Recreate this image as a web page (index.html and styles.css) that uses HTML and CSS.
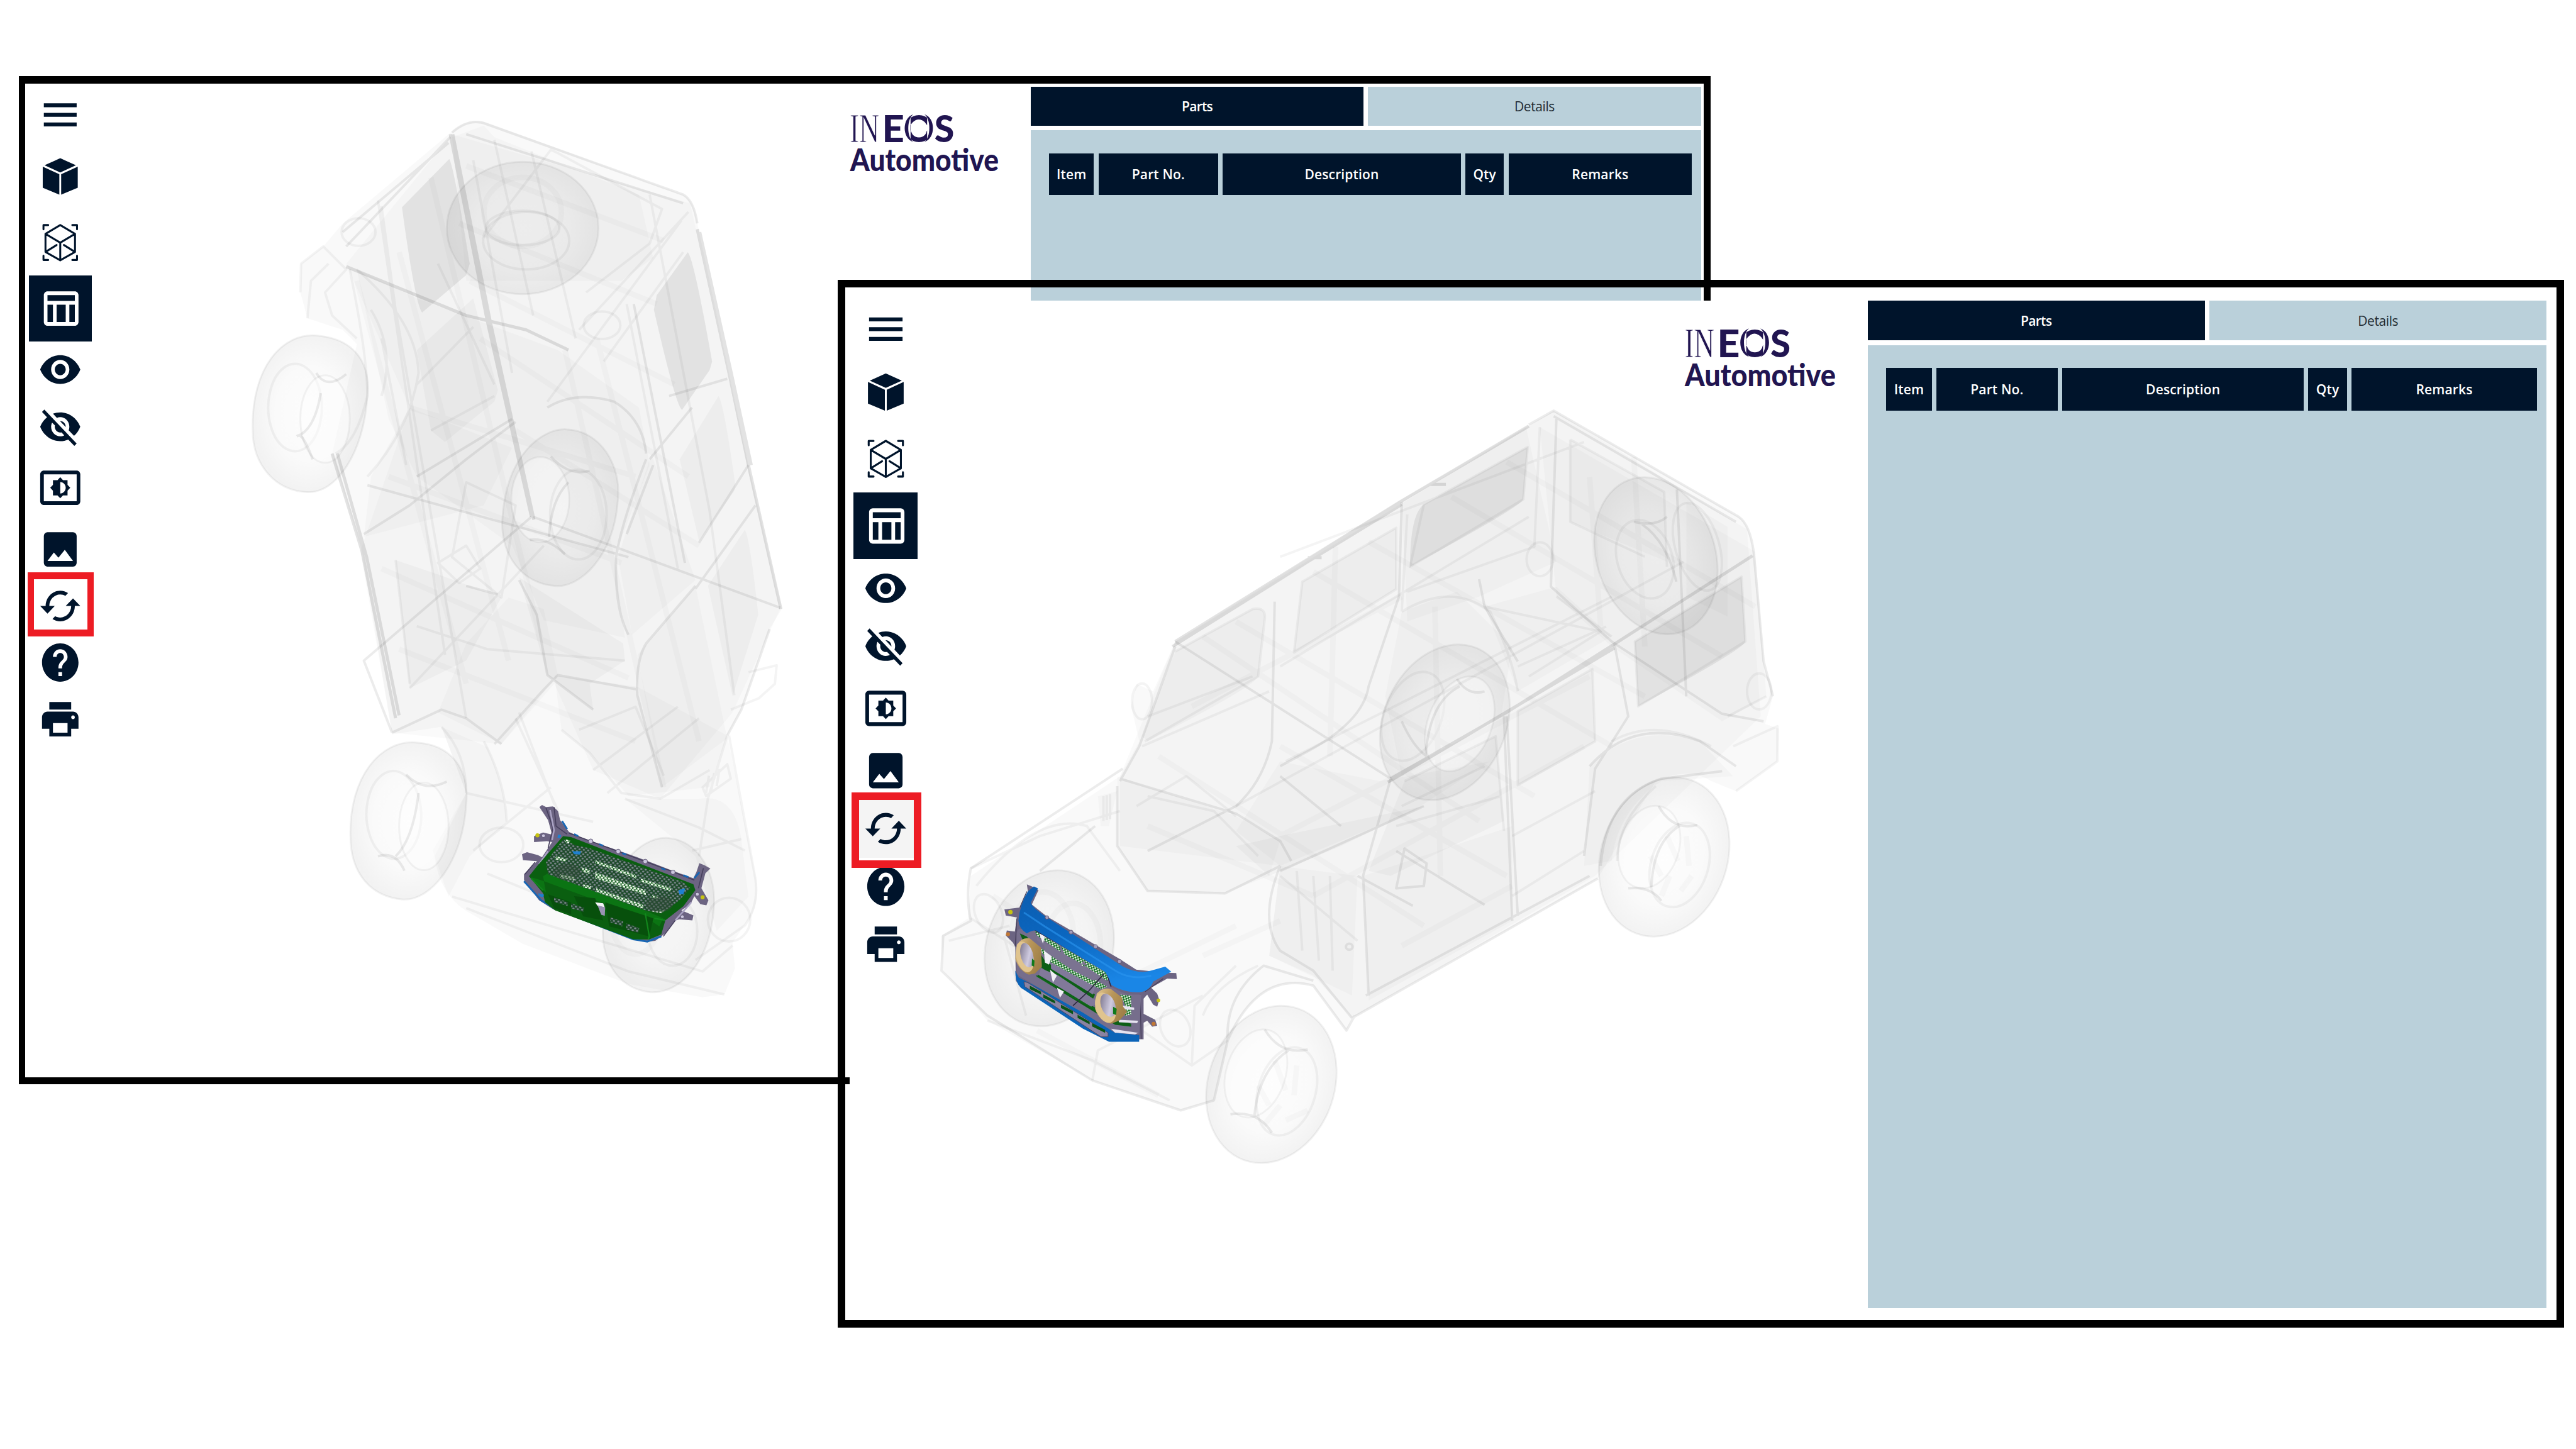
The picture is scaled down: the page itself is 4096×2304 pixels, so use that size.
FILE: index.html
```html
<!DOCTYPE html>
<html lang="en">
<head>
<meta charset="utf-8">
<title>INEOS Automotive parts viewer</title>
<link rel="stylesheet" href="styles.css">
</head>
<body>
<svg class="defs" width="0" height="0" aria-hidden="true">
  <defs>
    <symbol id="i-menu" viewBox="0 0 24 24" preserveAspectRatio="none"><path d="M3 18h18v-2H3zm0-5h18v-2H3zm0-7v2h18V6z"/></symbol>
    <symbol id="i-cube" viewBox="0 0 24 24" preserveAspectRatio="none"><path d="M12 2.500 20.600 6.150 12 9.900 3.400 6.150zM2.400 6.850 11.500 10.800V21.500L2.400 17.900zM21.600 6.850 12.500 10.800V21.500L21.600 17.900z"/></symbol>
    <symbol id="i-scan" viewBox="0 0 24 24" preserveAspectRatio="none"><path class="ln" d="M12 2.900 20.100 7.500V16.900L12 21.300 3.900 16.900V7.500zM3.900 7.500 12 12.100 20.100 7.500M12 12.100V21.300M3.900 16.900 10 13.300M20.100 16.900 14 13.300M2.800 5.100V2.900H5.400M18.600 2.900H21.200V5.100M2.800 18.900V21.100H5.400M18.600 21.100H21.200V18.900"/></symbol>
    <symbol id="i-table" viewBox="0 0 24 24" preserveAspectRatio="none"><path d="M20 3H5c-1.100 0-2 .9-2 2v14c0 1.100.9 2 2 2h15c1.100 0 2-.9 2-2V5c0-1.100-.9-2-2-2zm0 2v3H5V5h15zm-5 14h-5v-9h5v9zM5 10h3v9H5v-9zm12 9v-9h3v9h-3z"/></symbol>
    <symbol id="i-eye" viewBox="0 0 24 24" preserveAspectRatio="none"><path d="M12 4.500C7 4.500 2.730 7.610 1 12c1.730 4.390 6 7.500 11 7.500s9.270-3.110 11-7.500c-1.730-4.390-6-7.500-11-7.500zM12 17c-2.760 0-5-2.240-5-5s2.240-5 5-5 5 2.240 5 5-2.240 5-5 5zm0-8c-1.660 0-3 1.340-3 3s1.340 3 3 3 3-1.340 3-3-1.340-3-3-3z"/></symbol>
    <symbol id="i-eyeoff" viewBox="0 0 24 24" preserveAspectRatio="none"><path d="M12 7c2.760 0 5 2.240 5 5 0 .65-.13 1.260-.36 1.830l2.920 2.920c1.510-1.260 2.700-2.890 3.430-4.750-1.730-4.390-6-7.500-11-7.500-1.400 0-2.740.25-3.980.7l2.160 2.160C10.740 7.130 11.350 7 12 7zM2 4.270l2.280 2.280.46.46C3.080 8.300 1.780 10.020 1 12c1.730 4.390 6 7.500 11 7.500 1.550 0 3.030-.3 4.380-.84l.42.42L19.730 22 21 20.730 3.270 3 2 4.270zM7.530 9.800l1.550 1.550c-.05.21-.08.43-.08.650 0 1.660 1.340 3 3 3 .22 0 .44-.03.65-.08l1.550 1.550c-.67.33-1.410.53-2.200.53-2.760 0-5-2.240-5-5 0-.79.2-1.530.53-2.200zm4.310-.78l3.150 3.150.02-.16c0-1.660-1.340-3-3-3l-.17.01z"/></symbol>
    <symbol id="i-bright" viewBox="0 0 24 24" preserveAspectRatio="none"><path d="M21 3H3c-1.100 0-2 .9-2 2v14c0 1.100.9 2 2 2h18c1.100 0 2-.9 2-2V5c0-1.100-.9-2-2-2zm0 16.010H3V4.990h18v14.020zM8 16h2.500l1.500 1.500 1.500-1.500H16v-2.500l1.500-1.500-1.500-1.500V8h-2.500L12 6.500 10.500 8H8v2.500L6.500 12 8 13.500V16zm4-7c1.660 0 3 1.340 3 3s-1.340 3-3 3V9z"/></symbol>
    <symbol id="i-image" viewBox="0 0 24 24" preserveAspectRatio="none"><path fill-rule="evenodd" d="M5 3h14a2 2 0 0 1 2 2v14a2 2 0 0 1-2 2H5a2 2 0 0 1-2-2V5a2 2 0 0 1 2-2zM5 18H19L14.500 12.200 11 16.300 8.500 13.600z"/></symbol>
    <symbol id="i-sync" viewBox="0 0 24 24" preserveAspectRatio="none"><path d="M19 8l-4 4h3c0 3.310-2.690 6-6 6-1.010 0-1.970-.25-2.800-.7l-1.460 1.460C8.970 19.540 10.430 20 12 20c4.420 0 8-3.580 8-8h3l-4-4zM6 12c0-3.310 2.690-6 6-6 1.010 0 1.970.25 2.800.7l1.460-1.460C15.030 4.460 13.570 4 12 4c-4.420 0-8 3.580-8 8H1l4 4 4-4H6z"/></symbol>
    <symbol id="i-help" viewBox="0 0 24 24" preserveAspectRatio="none"><path d="M12 2C6.480 2 2 6.480 2 12s4.480 10 10 10 10-4.480 10-10S17.520 2 12 2zm1 17h-2v-2h2v2zm2.070-7.750l-.9.920C13.450 12.900 13 13.500 13 15h-2v-.5c0-1.100.45-2.100 1.170-2.830l1.240-1.260c.37-.36.59-.86.59-1.410 0-1.100-.9-2-2-2s-2 .9-2 2H8c0-2.210 1.790-4 4-4s4 1.790 4 4c0 .88-.36 1.680-.93 2.250z"/></symbol>
    <symbol id="i-print" viewBox="0 0 24 24" preserveAspectRatio="none"><path d="M19 8H5c-1.660 0-3 1.340-3 3v6h4v4h12v-4h4v-6c0-1.660-1.340-3-3-3zm-3 11H8v-5h8v5zm3-7c-.55 0-1-.45-1-1s.45-1 1-1 1 .45 1 1-.45 1-1 1zm-1-9H6v4h12V3z"/></symbol>

    <radialGradient id="tyre" cx=".5" cy=".5" r=".5">
      <stop offset="0" stop-opacity=".01"/><stop offset=".6" stop-opacity=".02"/><stop offset="1" stop-opacity=".05"/>
    </radialGradient>
    <linearGradient id="blue" x1="0" y1="0" x2=".25" y2="1">
      <stop offset="0" stop-color="#0c5cae"/><stop offset=".5" stop-color="#0b66bf"/><stop offset="1" stop-color="#1a86e6"/>
    </linearGradient>
    <linearGradient id="gold" x1="0" y1="0" x2="1" y2=".5">
      <stop offset="0" stop-color="#e3c995"/><stop offset=".5" stop-color="#b8965a"/><stop offset="1" stop-color="#a08048"/>
    </linearGradient>
    <linearGradient id="lamp" x1="0" y1="0" x2="1" y2="1">
      <stop offset="0" stop-color="#6f6880"/><stop offset=".6" stop-color="#cfcbe0"/><stop offset="1" stop-color="#8b84a0"/>
    </linearGradient>
    <pattern id="mesh" width="22" height="22" patternUnits="userSpaceOnUse" patternTransform="rotate(8)">
      <rect width="22" height="22" fill="#1d4a2a"/>
      <path fill="#808a90" d="M2 5.500 5 1.500H11L14 5.500 11 9.500H5zM13 16.500 16 12.500H22V20.500H16zM0 12.500 3 16.500 0 20.500zM22 12.500V20.500z"/>
    </pattern>
    <pattern id="meshlight" width="18" height="20" patternUnits="userSpaceOnUse" patternTransform="rotate(8)">
      <rect width="18" height="20" fill="#1c6426"/>
      <ellipse cx="5" cy="5" rx="7.400" ry="4.800" fill="#f2fbef"/><ellipse cx="14" cy="15" rx="7.400" ry="4.800" fill="#f2fbef"/>
    </pattern>
    <pattern id="meshfront" width="16" height="18" patternUnits="userSpaceOnUse" patternTransform="rotate(28)">
      <rect width="16" height="18" fill="#12701f"/>
      <ellipse cx="4" cy="5" rx="4.800" ry="4.200" fill="#f0f8f0"/><ellipse cx="12" cy="14" rx="4.800" ry="4.200" fill="#f0f8f0"/>
    </pattern>
  </defs>
</svg>

<main class="desktop">

  <section class="window back">
    <div class="app">
      <nav class="toolbar">
        <button><svg><use href="#i-menu"/></svg></button>
        <button class="tall"><svg><use href="#i-cube"/></svg></button>
        <button class="tall"><svg><use href="#i-scan"/></svg></button>
        <button class="tall active"><svg><use href="#i-table"/></svg></button>
        <button><svg><use href="#i-eye"/></svg></button>
        <button><svg><use href="#i-eyeoff"/></svg></button>
        <button class="tall"><svg><use href="#i-bright"/></svg></button>
        <button><svg><use href="#i-image"/></svg></button>
        <button class="marked"><svg><use href="#i-sync"/></svg></button>
        <button><svg><use href="#i-help"/></svg></button>
        <button><svg><use href="#i-print"/></svg></button>
      </nav>
      <div class="viewport">
        <svg class="scene" viewBox="153 139 1561 1652" preserveAspectRatio="none">
          <svg class="ghost" x="400" y="180" width="920" height="1500" viewBox="0 0 1568 1568" preserveAspectRatio="none">
            <path class="f0" d="M600 40Q650 15 700 25L1255 150Q1288 160 1297 205L1385 460 1440 620 1535 870 1500 905 1420 1045 1380 1090 1462 1340Q1472 1385 1440 1410L1395 1450 1402 1495 1372 1540 1310 1545 1100 1522 800 1452 640 1395Q565 1365 550 1300L640 1190 570 1075 430 1088 345 770 260 600 330 410 290 385 190 365 170 320 172 270 235 240 290 200z"/>
            <path class="f1" d="M600 45 1275 165 1530 870 1395 1050 1190 1200 1000 1150 890 1000 740 1105 430 1085 340 770 480 520 300 270z"/>
            <path class="f1" d="M690 30 720 50 1130 150 1170 260 1080 300 640 300 600 50z"/>
            <path class="f1" d="M330 280 500 330 900 420 1130 520 1160 620 1060 780 1090 920 860 890 770 760 500 640 420 540z"/>
            <path class="f3" d="M458 172 592 88Q605 100 650 270L640 290 515 355Q495 340 458 172z"/>
            <path class="f3" d="M1180 325 1268 250Q1285 260 1337 440L1330 455 1252 524Q1235 520 1172 350z"/>
            <path class="f2" d="M1245 610 1355 500Q1370 510 1403 655L1400 665 1300 752z"/>
            <path class="f2" d="M1325 830 1430 732Q1445 750 1468 880L1395 1022z"/>
            <path class="f2" d="M500 420 660 330 730 490 720 510 580 580 540 560z"/>
            <path class="f1" d="M370 640 480 520 770 590 690 690 350 745z"/>
            <path class="f2" d="M440 785 560 810 740 850 640 960 480 1008z"/>
            <path class="f1" d="M640 930 760 850 860 870 900 985 740 1105 560 1050z"/>
            <path class="f2" d="M790 815 1085 930 1090 960 990 1000 1000 1045 870 985z"/>
            <path class="f1" d="M890 985 1125 1005 1380 1090 1330 1180 1100 1195 990 1120 910 1080z"/>
            <path class="f1" d="M1125 950 1290 830 1380 1095 1195 1180z"/>
            <path class="f1" d="M1070 780 1165 600 1290 820 1110 915z"/>
            <path class="f1" d="M570 1075 700 1110Q750 1180 755 1240L650 1300 590 1370 545 1290 640 1190z"/>
            <path class="f1" d="M1090 1200 1300 1200Q1400 1190 1420 1270L1440 1370 1350 1430 1290 1300z"/>
            <ellipse class="t" cx="800" cy="208" rx="215" ry="115"/><ellipse class="s1" cx="800" cy="208" rx="104" ry="30"/><ellipse class="s1" cx="810" cy="230" rx="122" ry="50"/>
            <ellipse class="s0" cx="800" cy="180" rx="110" ry="60"/>
            <path class="t" d="M35 560C30 450 120 390 215 395C320 400 370 440 360 500C350 600 270 670 190 667C100 665 35 620 35 560z"/>
            <ellipse class="s1" cx="155" cy="520" rx="76" ry="76" transform="rotate(20 155 520)"/><ellipse class="hole" cx="240" cy="540" rx="70" ry="76"/><path class="s2" d="M160 570Q175 560 205 610M215 460Q245 490 300 462M160 570Q210 560 228 495"/>
            <path class="t" d="M312 1265C308 1160 400 1098 495 1102C600 1105 650 1150 640 1210C630 1310 540 1378 460 1375C370 1370 312 1330 312 1265z"/>
            <ellipse class="s1" cx="435" cy="1228" rx="78" ry="76" transform="rotate(20 435 1228)"/><ellipse class="hole" cx="520" cy="1248" rx="70" ry="76"/><path class="s2" d="M390 1300Q440 1290 465 1325M470 1158Q520 1190 585 1170M440 1300Q490 1270 505 1190"/>
            <path class="t" d="M742 720C750 600 860 555 925 558C1020 560 1080 620 1070 680C1060 780 960 835 890 830C800 825 742 780 742 720z"/>
            <ellipse class="hole" cx="850" cy="680" rx="82" ry="74"/><ellipse class="s1" cx="958" cy="706" rx="80" ry="78"/><path class="s2" d="M820 750Q870 745 920 775M880 605Q930 640 990 630M875 745Q880 680 930 650"/>
            <path class="t" d="M1027 1430C1030 1330 1130 1265 1210 1268C1300 1272 1350 1330 1342 1390C1330 1490 1240 1540 1160 1536C1080 1530 1027 1490 1027 1430z"/>
            <ellipse class="s0" cx="1120" cy="1400" rx="72" ry="70"/><ellipse class="s1" cx="1225" cy="1430" rx="70" ry="60"/><ellipse class="s1" cx="1385" cy="1410" rx="60" ry="38"/>
            <ellipse class="s1" cx="740" cy="1280" rx="62" ry="30"/><ellipse class="s1" cx="335" cy="215" rx="48" ry="24"/><ellipse class="s1" cx="1025" cy="377" rx="52" ry="24"/>
            <path class="s3" d="M595 45 700 370 825 710M602 45 708 370 832 715M300 275 500 325 640 360 810 385 930 420M1295 210 1385 460 1440 620 1532 870M1302 215 1395 470 1448 620M260 600 345 770 440 1060M275 600 358 780 450 1055"/>
            <path class="s2" d="M600 42Q650 15 700 28L1255 150Q1285 160 1295 200M640 45 1255 165M590 60 290 215M595 50 300 240M825 710 350 960 430 1085M500 640 770 540M350 740 480 690 640 610 780 545M830 710 1530 868M360 655 1100 780M1500 905 1420 1045 1380 1090M1290 830 1150 930Q1120 960 1125 1020L1195 1180M1215 500 1380 470M1160 610 1280 520M1300 755 1440 620M1290 835 1460 690M720 1105 860 1010 900 985 1125 1010M1000 1045 870 985 840 880 790 820M640 830 730 845M430 1085 570 1045 640 1060 740 1105M870 520Q950 490 1060 510Q1140 540 1150 600M1150 610Q1080 720 1065 780Q1060 870 1100 915M1115 340 1260 790M1170 620 1095 740"/>
            <path class="s1" d="M720 55 830 360M825 75 950 400M1160 150 1330 700 1400 1020M660 90 770 460M1095 340 1240 800M390 160 580 950M400 170 440 350 640 1060M690 225 880 72 900 78 1195 175 1160 235 980 320M1270 180 960 385M1250 195 870 510M1030 440 1255 250M500 900 700 940 1090 960M480 1008 860 760M440 785 480 1000M560 790 640 760 680 800 620 825zM780 1060 900 1220M790 1050 890 1210M640 1190 1000 1240M660 1290 880 1180M600 1370 1310 1500 1395 1455M640 1390 1100 1500 1372 1540M700 1330 900 1380M1090 1200 1300 1250 1430 1290M1380 1090 1325 1200 1300 1300M1385 1090 1460 1340Q1470 1385 1430 1420L1290 1480M1280 1290 1420 1270M1310 1180 1380 1140 1390 1165 1320 1195zM1320 1190l8-30M1335 1185l8-30M1350 1178l8-30M1440 980 1520 968 1515 1000 1470 1025 1390 1045M170 320 172 270 235 240 300 280 240 320 260 360 330 400M190 365 200 300 250 270M330 280Q500 370 505 460Q480 560 360 640M310 280Q360 430 360 500Q330 580 270 600M370 350Q440 420 400 500M400 400 470 620M570 1075Q640 1120 640 1190M690 1100Q750 1170 755 1240M500 480 660 380M540 560 720 500M560 270 720 480M640 650 780 690 740 850 600 780zM960 1080 1120 1040 1200 1160M1000 1150 1240 1040M1040 1190 1300 1060M910 1080 990 1120 1080 1190 1190 1200 1330 1150"/>
            <path class="s0" d="M640 100 1200 230M620 200 1180 340M650 300 1230 480M680 400 1270 640M780 560 1300 760M480 520 1120 640M420 640 1080 790M400 800 1100 990M450 940 1120 1100M330 300 640 1000M450 250 760 960M540 120 850 920M920 420 1200 1180M1010 400 1300 1100"/>
          </svg>
          <svg class="part" x="840" y="1300" width="380" height="300" viewBox="0 0 1140 900">
            <path fill="#6c6482" d="M172 125 185 115 205 125 240 122 265 145 275 190 320 250 400 285 560 340 700 390 830 440 940 480 955 450 970 405 995 415 1025 432 1000 455 980 530 1015 590 1005 615 975 610 945 570 925 610 880 640 940 665 935 690 870 685 850 690 800 755 750 792 700 798 240 635 170 590 95 490 95 460 160 395 90 390 85 360 110 350 165 365 185 375 235 300 210 295 145 300 145 270 190 252 235 262 215 190z"/>
            <path fill="none" stroke="#453e5c" stroke-width="5" d="M205 130 240 230 215 330M245 125 255 220 310 260M150 400 100 460M320 255 830 445 945 490M990 430 965 530M850 690 790 770"/>
            <path fill="none" stroke="#aaa3c4" stroke-width="8" d="M225 140 245 240 235 290M170 410 215 345M930 600 850 690"/>
            <path fill="none" stroke="#1766b4" stroke-width="9" d="M95 495 180 590 245 630 640 785 710 796 780 770M285 195 310 235M345 260 365 270M470 310 490 318M585 355 605 362M780 430 800 438M890 465 915 475M945 480 970 450"/>
            <path fill="#0a5f10" d="M290 270 330 275 940 510 950 540 890 620 800 690 780 760 720 785 640 785 250 640 200 600 190 555 120 470 160 420z"/>
            <path fill="#0b7413" d="M130 475 190 540 205 552 190 470 215 455 720 650 790 680 770 720 725 690 180 490z"/>
            <path fill="#07500c" d="M215 560 330 600 330 660 245 630zM345 570 450 580 490 690 390 670zM500 600 740 680 720 770 520 720z"/>
            <path fill="url(#mesh)" d="M290 285 350 315 420 330 890 500 925 530 860 600 780 655 700 640 215 460 205 400z"/>
            <path fill="url(#meshlight)" d="M450 390 655 465 655 482 450 405zM680 482 830 530 825 545 675 497zM450 450 700 540 705 565 450 480zM455 530 690 612 690 632 455 548zM255 370 310 385 300 398 250 385zM385 425 425 440 420 460 385 445zM275 460 350 475 345 492 275 478zM390 510 430 520 430 535 390 525zM300 285 325 292 320 308 300 300zM735 565 765 572 760 582 730 578zM725 645 800 640 780 655z"/>
            <g fill="url(#mesh)"><path d="M245 575 315 600 312 618 245 598zM330 605 395 628 390 648 330 630zM525 675 590 695 585 720 525 700zM605 705 670 728 665 752 605 735z"/></g>
            <ellipse cx="310" cy="450" rx="68" ry="42" fill="#33493a" opacity=".45"/><ellipse cx="770" cy="610" rx="68" ry="40" fill="#33493a" opacity=".45"/>
            <path fill="#f4f4f8" d="M450 600 490 605 498 625 462 618z"/><path fill="#9a93b4" d="M462 615 500 625 498 668 480 662z"/>
            <path fill="none" stroke="#12851c" stroke-width="7" d="M130 480 190 540M700 655 720 770 715 785M745 680 800 690"/>
            <path fill="#1f80cf" d="M335 345 380 345 375 362 345 360zM865 540 900 530 890 560 870 560zM265 262 280 265 275 280 262 278zM165 555 195 562 190 575 170 570z"/>
            <circle cx="162" cy="266" r="10" fill="#c6c312"/><circle cx="986" cy="575" r="10" fill="#c6c312"/>
            <g fill="#cbc6de" stroke="#59526e" stroke-width="3"><circle cx="192" cy="268" r="9"/><circle cx="960" cy="560" r="9"/><circle cx="428" cy="295" r="11"/><circle cx="565" cy="346" r="11"/><circle cx="700" cy="396" r="11"/><circle cx="838" cy="450" r="11"/><circle cx="885" cy="672" r="9"/></g>
          </svg>
          <g class="logo">
            <text class="name" y="236.200"><tspan class="thin" x="1413.500" textLength="49" lengthAdjust="spacingAndGlyphs">IN</tspan><tspan class="heavy" x="1467" textLength="37" lengthAdjust="spacingAndGlyphs">E</tspan><tspan class="heavy" x="1504" textLength="49" lengthAdjust="spacingAndGlyphs">O</tspan><tspan class="heavy" x="1554" textLength="33" lengthAdjust="spacingAndGlyphs">S</tspan></text>
            <path class="cut" d="M1514.500 188H1503V238H1514.500zM1542 188H1553V238H1542zM1514 208Q1528 189 1542 208V217Q1528 236 1514 217z"/>
            <path class="arc" d="M1519 190C1500 196 1500 230 1519 236C1508 228 1508 198 1519 190zM1537.500 190C1556.500 196 1556.500 230 1537.500 236C1548.500 228 1548.500 198 1537.500 190z"/>
            <text class="word" x="1414" y="284" textLength="247" lengthAdjust="spacingAndGlyphs">Automotive</text>
          </g>
        </svg>
      </div>
      <aside class="panel">
        <div class="tabs"><div class="tab on">Parts</div><div class="tab">Details</div></div>
        <div class="sheet">
          <div class="thead"><span>Item</span><span>Part No.</span><span>Description</span><span>Qty</span><span>Remarks</span></div>
        </div>
      </aside>
    </div>
  </section>

  <section class="window front">
    <div class="app">
      <nav class="toolbar">
        <button><svg><use href="#i-menu"/></svg></button>
        <button class="tall"><svg><use href="#i-cube"/></svg></button>
        <button class="tall"><svg><use href="#i-scan"/></svg></button>
        <button class="tall active"><svg><use href="#i-table"/></svg></button>
        <button><svg><use href="#i-eye"/></svg></button>
        <button><svg><use href="#i-eyeoff"/></svg></button>
        <button class="tall"><svg><use href="#i-bright"/></svg></button>
        <button><svg><use href="#i-image"/></svg></button>
        <button class="marked"><svg><use href="#i-sync"/></svg></button>
        <button><svg><use href="#i-help"/></svg></button>
        <button><svg><use href="#i-print"/></svg></button>
      </nav>
      <div class="viewport">
        <svg class="scene" viewBox="1525 499.500 1579.300 1695" preserveAspectRatio="none">
          <svg class="ghost" x="1540" y="660" width="1440" height="1300" viewBox="0 0 1568 1568" preserveAspectRatio="none">
            <path class="f0" d="M1135 27 1470 240Q1490 255 1497 310L1515 530 1532 600 1518 655 1543 665 1540 730 1465 790 1420 770Q1380 740 1320 770L1215 965 770 1245 760 1270 700 1180Q600 1150 545 1290L520 1410 460 1430 300 1370 110 1250 30 1150 27 1080 75 1045 80 960 350 760 385 690 370 620 380 575 410 590 450 490z"/>
            <path class="f1" d="M1135 27 1485 265 1510 640 1210 960 770 1245 700 1160 620 1120 640 940 350 900 350 760 450 490 860 205z"/>
            <path class="f1" d="M1110 60 1500 310 1520 600 1440 650 1240 500 1140 400z"/>
            <path class="f1" d="M860 210 1085 60 1140 330 1000 400 870 450z"/>
            <path class="f2" d="M450 510 590 425Q610 420 612 440L600 560Q595 580 400 690L390 680z"/>
            <path class="f2" d="M680 370 850 262 850 385 665 512z"/>
            <path class="f3" d="M900 215 1088 100 1080 205Q1075 220 875 340Q875 235 900 215z"/>
            <path class="f3" d="M1282 490 1475 360 1482 490Q1480 505 1288 620z"/>
            <path class="f2" d="M1070 630 1205 545 1210 690 1070 778z"/>
            <path class="f2" d="M865 770 1030 680 1045 850 840 960 800 950z"/>
            <path class="f1" d="M1165 85 1335 190 1340 330 1165 250zM1375 210 1450 260 1450 440 1375 400z"/>
            <path class="f1" d="M345 760 560 840 640 890 620 960 540 995 400 990 345 900z"/>
            <path class="f1" d="M640 730 820 770 1020 730 880 830 640 940 560 870z"/>
            <path class="f2" d="M560 900 640 880 900 820 750 900 620 960z"/>
            <path class="f1" d="M640 940 780 960 770 1200 620 1120z"/>
            <path class="f1" d="M790 960 1060 860 1060 1050 800 1210z"/>
            <path class="f1" d="M860 430 960 390 1060 500 1040 640 860 760 830 600z"/>
            <path class="f1" d="M1010 420 1140 380 1240 480 1070 590z"/>
            <path class="f1" d="M1200 740Q1280 650 1400 690L1460 760 1330 770Q1250 830 1240 930L1190 940z"/>
            <path class="f1" d="M310 800 345 790 330 860 315 860z"/>
            <ellipse class="t" cx="938" cy="652" rx="112" ry="160" transform="rotate(18 938 652)"/><ellipse class="s1" cx="880" cy="640" rx="52" ry="92" transform="rotate(18 880 640)"/><ellipse class="hole" cx="965" cy="655" rx="58" ry="98" transform="rotate(18 965 655)"/><path class="s2" d="M905 720Q880 700 860 650M960 565Q980 600 1010 590M903 720Q910 610 965 580"/>
            <ellipse class="t" cx="1320" cy="318" rx="108" ry="160" transform="rotate(-14 1320 318)"/><ellipse class="s1" cx="1300" cy="325" rx="50" ry="80" transform="rotate(-14 1300 325)"/><ellipse class="s1" cx="1395" cy="300" rx="40" ry="90" transform="rotate(-14 1395 300)"/><path class="s2" d="M1295 255Q1340 290 1357 370M1280 250Q1320 260 1340 240"/>
            <ellipse class="t" cx="1335" cy="922" rx="115" ry="162" transform="rotate(14 1335 922)"/><ellipse class="hole" cx="1308" cy="902" rx="54" ry="84" transform="rotate(14 1308 902)"/><ellipse class="s1" cx="1363" cy="938" rx="52" ry="86" transform="rotate(14 1363 938)"/><path class="s2" d="M1325 820Q1350 870 1395 858M1270 985Q1310 980 1330 1010M1312 982Q1315 890 1365 858"/><path class="s0" d="M1310 920 1330 960M1340 880 1360 930M1375 880 1380 940M1330 1000 1345 960M1385 960 1365 990"/>
            <ellipse class="t" cx="624" cy="1378" rx="115" ry="160" transform="rotate(14 624 1378)"/><ellipse class="hole" cx="596" cy="1356" rx="54" ry="90" transform="rotate(14 596 1356)"/><ellipse class="s1" cx="652" cy="1392" rx="52" ry="90" transform="rotate(14 652 1392)"/><path class="s2" d="M612 1268Q640 1320 690 1308M550 1438Q600 1430 625 1475M593 1445Q600 1350 655 1310"/><path class="s0" d="M600 1380 620 1420M630 1330 650 1390M670 1340 665 1400M610 1460 640 1420M690 1430 650 1450"/>
            <ellipse class="t" cx="222" cy="1105" rx="115" ry="158" transform="rotate(12 222 1105)"/><ellipse class="s0" cx="210" cy="1080" rx="56" ry="88"/><ellipse class="s0" cx="265" cy="1100" rx="50" ry="85"/>
            <ellipse class="s1" cx="112" cy="1035" rx="24" ry="40" transform="rotate(-20 112 1035)"/><ellipse class="s1" cx="450" cy="1265" rx="26" ry="38" transform="rotate(-20 450 1265)"/><ellipse class="s1" cx="1110" cy="325" rx="24" ry="34"/><ellipse class="s1" cx="1507" cy="590" rx="22" ry="36"/><ellipse class="s1" cx="390" cy="610" rx="18" ry="36"/><circle class="s2" cx="765" cy="1102" r="6"/>
            <path class="s3" d="M450 490 860 208 1090 58M445 500 690 330 860 215M840 765 1050 632 1245 495 1495 318M835 772 1245 503M910 175 940 175M690 322 715 322"/>
            <path class="s2" d="M1090 55 1135 27 1470 240Q1490 255 1497 310L1515 530 1532 600M1135 38 1465 250M450 490 840 765M450 500 385 700 350 770M840 765 790 960 800 1200M860 210 855 400 800 580Q790 650 690 710L640 740M630 410 625 690Q610 770 560 820L400 910M1140 40 1130 380 1240 490 1440 635 1515 650M1358 185 1375 600M1245 495 1270 640 1210 745 1190 920M1045 640 1060 1050M1050 640 1070 1040M770 1245 1215 965M795 1200 1200 960M350 765 560 835 640 890 660 930M345 780 345 900 400 990 540 995 640 940M640 760 750 860M900 820 740 900 640 950M640 940Q600 1050 640 1110L700 1150 770 1245M355 745 80 945Q70 1000 80 1050L30 1080 27 1150 110 1240 300 1370 460 1430 520 1410 545 1290Q600 1150 700 1180L760 1270 775 1240M545 1290Q540 1200 610 1140L700 1170M305 860 205 950M1000 365 1010 420 1070 530M1200 740Q1280 640 1400 690L1465 740M1220 940Q1230 800 1330 765L1440 750M850 910 1010 1018M780 960 880 1020M865 905 905 935 900 980 850 985z"/>
            <path class="s1" d="M450 510 590 425Q615 420 612 445L600 560 395 690M680 370 850 262 850 385 665 512zM900 215 1088 100 1080 205 875 340zM1282 490 1475 360 1482 490 1288 620zM1070 630 1205 545 1210 690 1070 778zM865 770 1030 680 1045 870M1165 85 1335 190 1340 340M1165 85 1165 250 1300 320M640 540 1090 240M640 320 1190 90M1110 60 1100 300 870 390M870 235 860 430M400 640 590 560M850 860 1040 800M390 700 620 590M560 820 1370 330M650 730 1240 400M1010 420 1220 470 1090 560M1070 540 1230 460M1140 400 1240 480M1060 880 1210 790M1060 1000 1190 910M860 430Q950 370 1020 430Q1060 520 1070 590M860 820 1010 740M80 1045 300 1200 480 1340 545 1290M110 1250 300 1330 440 1410M300 1370 310 1310 500 1200M40 1090 150 1060M140 1080 180 1240M480 1340 485 1220 560 1140M500 1240Q520 1180 600 1140M90 980Q200 830 290 860L350 950M80 945 205 880 350 830M400 800 520 830 600 920M380 820 470 760 560 840M640 960 780 1090M670 950 680 1110M700 960 710 1130M730 960 735 1150M1240 690Q1320 640 1420 700M1250 930Q1250 850 1320 780M1460 700 1540 660 1540 730 1465 790M1450 640 1520 600M320 800v50M326 798v50M332 796v50"/>
            <path class="s0" d="M500 480 1000 850M560 450 1100 800M700 350 1240 700M800 290 1300 600M950 200 1440 520M1050 130 1500 420M420 720 900 1060M640 700 1050 960M400 860 700 1000M480 620 860 400M640 880 1200 560M700 1000 1190 700M500 1120 640 1050M300 1200 560 1060M860 1100 1060 980M120 1000 300 1130M200 1270 420 1400M1200 160 1220 460M1280 120 1300 500M920 420 930 960M740 300 730 720"/>
          </svg>
          <svg class="part" x="1640" y="1440" width="360" height="320" viewBox="0 0 1080 960">
            <path fill="#6c6482" d="M200 90 225 100 258 118 225 190 300 250 420 320 540 390 660 460 745 515 880 530 945 532 948 562 900 560 820 605 850 635 860 665 850 700 830 690 800 640 782 660 782 735 840 765 850 795 825 800 800 770 782 780 782 862 600 862 170 605 145 570 142 400 130 380 95 345 100 320 140 325 150 255 95 245 88 215 165 205 205 125z"/>
            <path fill="none" stroke="#443d58" stroke-width="4" d="M150 260 142 400M200 125 165 205M765 640 770 860M725 650 725 830M880 560 790 625"/>
            <path fill="#766e8c" d="M160 310 240 320 590 520 615 600 700 640 770 640 760 835 640 830 150 540 150 330z"/>
            <path fill="#0d5f16" d="M165 335 200 350 250 410 290 470 540 640 530 660 280 510 220 460zM255 540 620 750 720 785 720 800 640 790 250 550z"/>
            <path fill="url(#meshfront)" d="M240 322 595 530 612 560 600 570 480 500 380 435 250 345zM270 408 600 600 570 612 470 570 320 480 275 430zM665 640 720 645 720 740 690 745 690 690z"/>
            <path fill="#7b7391" d="M285 380 480 490 570 550 530 570 430 520 290 425zM345 335 388 440 372 436zM250 350 290 385 380 440 360 445 250 370zM470 500 500 490 480 470z"/>
            <path fill="#81799a" d="M320 480 540 600 530 640 320 510zM270 510 350 540 560 680 520 700 260 540z"/>
            <path fill="#f1f0f6" d="M262 335 292 345 280 385zM285 420 325 450 310 490 290 480zM315 515 350 545 330 580zM350 605 385 625 365 655z"/>
            <path fill="#e6e3f0" d="M655 690 735 705 735 716 660 712zM655 765 755 770 750 782 660 778zM620 810 755 830 740 838 640 830z"/>
            <path fill="none" stroke="#2c2740" stroke-width="5" d="M585 535 510 620 430 695M240 318 340 375 595 525 620 600"/>
            <path fill="url(#blue)" d="M205 125 235 100 255 110 220 180Q220 200 300 255L680 500Q760 540 820 520L890 500 920 525 830 575Q810 625 760 628Q680 630 620 590Q600 530 580 520L245 320Q220 320 200 335Q160 310 158 270Q165 190 205 125z"/>
            <path fill="none" stroke="#2c96f0" stroke-width="9" opacity=".6" d="M185 230 290 300 640 520Q720 570 820 545"/>
            <path fill="#0c64b8" d="M142 520 160 555 230 590 480 730 640 830 760 842 760 875 610 875 480 810 170 605Q142 580 142 520z"/>
            <path fill="#8a83a2" stroke="#4a435f" stroke-width="3" d="M185 575 205 580 605 830 605 850 570 850 190 600z"/>
            <path fill="#0b5515" d="M215 595 270 625 272 640 215 612zM282 638 340 670 342 684 282 655zM370 690 430 722 430 738 370 706zM453 740 513 775 513 788 453 756zM525 782 590 815 590 830 525 798z"/>
            <path fill="none" stroke="#0f6f1a" stroke-width="4" d="M245 545 340 600M400 635 590 740"/>
            <g>
              <path fill="url(#gold)" d="M150 390Q180 350 215 360L270 405 275 500 240 535 210 540Q160 520 142 460z"/>
              <ellipse cx="190" cy="452" rx="42" ry="78" fill="#e0c48e" transform="rotate(-14 190 452)"/><ellipse cx="200" cy="443" rx="31" ry="62" fill="url(#lamp)" transform="rotate(-14 200 443)"/><path fill="#0f7a1c" d="M226 460 238 470 236 500 224 495z"/>
              <path fill="url(#gold)" d="M548 635Q580 600 620 612L675 655 680 700 700 725 660 770 620 785Q560 770 540 710z"/>
              <ellipse cx="592" cy="705" rx="48" ry="78" fill="#e0c48e" transform="rotate(-20 592 705)"/><ellipse cx="605" cy="693" rx="35" ry="60" fill="url(#lamp)" transform="rotate(-20 605 693)"/><path fill="#0f7a1c" d="M630 700 648 710 645 742 630 735z"/>
            </g>
            <circle cx="118" cy="228" r="11" fill="#c6c312"/><circle cx="856" cy="668" r="9" fill="#c6c312"/><circle cx="106" cy="338" r="10" fill="#c07836"/><circle cx="832" cy="785" r="10" fill="#c07836"/>
            <g fill="#a49dbb" stroke="#59526e" stroke-width="3"><circle cx="300" cy="255" r="9"/><circle cx="420" cy="328" r="10"/><circle cx="542" cy="400" r="10"/><circle cx="662" cy="474" r="10"/></g>
          </svg>
          <g class="logo" transform="translate(1364.500 351) scale(1.0155 1.025)">
            <text class="name" y="236.200"><tspan class="thin" x="1413.500" textLength="49" lengthAdjust="spacingAndGlyphs">IN</tspan><tspan class="heavy" x="1467" textLength="37" lengthAdjust="spacingAndGlyphs">E</tspan><tspan class="heavy" x="1504" textLength="49" lengthAdjust="spacingAndGlyphs">O</tspan><tspan class="heavy" x="1554" textLength="33" lengthAdjust="spacingAndGlyphs">S</tspan></text>
            <path class="cut" d="M1514.500 188H1503V238H1514.500zM1542 188H1553V238H1542zM1514 208Q1528 189 1542 208V217Q1528 236 1514 217z"/>
            <path class="arc" d="M1519 190C1500 196 1500 230 1519 236C1508 228 1508 198 1519 190zM1537.500 190C1556.500 196 1556.500 230 1537.500 236C1548.500 228 1548.500 198 1537.500 190z"/>
            <text class="word" x="1414" y="284" textLength="247" lengthAdjust="spacingAndGlyphs">Automotive</text>
          </g>
        </svg>
      </div>
      <aside class="panel">
        <div class="tabs"><div class="tab on">Parts</div><div class="tab">Details</div></div>
        <div class="sheet">
          <div class="thead"><span>Item</span><span>Part No.</span><span>Description</span><span>Qty</span><span>Remarks</span></div>
        </div>
      </aside>
    </div>
  </section>

</main>
</body>
</html>
```
FILE: styles.css
```css
*, *::before, *::after { box-sizing: border-box; }

body {
  margin: 0;
  background: #fff;
  font-family: "Open Sans", "Noto Sans", sans-serif;
}

.defs { position: absolute; }

.desktop {
  position: relative;
  width: 4096px;
  height: 2304px;
  overflow: hidden;
}

.window {
  position: absolute;
  border: solid #000;
}

.back {
  left: 30px;
  top: 121px;
  width: 2690px;
  height: 1603px;
  border-width: 12px 11px 11px 10px;
  --icon-w: 69.6px;
  --icon-h: 73.2px;
  --row: 90.2px;
  --row-tall: 105px;
}

.front {
  left: 1332px;
  top: 445px;
  width: 2745px;
  height: 1666px;
  border-width: 12px;
  padding: 20.8px 0 0 6.6px;
  --icon-w: 71px;
  --icon-h: 74.8px;
  --row: 92px;
  --row-tall: 106.5px;
}

.app {
  display: flex;
  height: 100%;
  background: #fff;
}

.back .app { padding: 0 4.5px 0 6.2px; }
.front .app { padding: 0 15.7px 0 6.8px; }

/* toolbar */
.toolbar {
  display: flex;
  flex-direction: column;
  flex: none;
}
.back .toolbar { width: 100.2px; padding-top: 4.8px; }
.front .toolbar { width: 101.4px; }

.toolbar button {
  position: relative;
  display: flex;
  align-items: center;
  justify-content: center;
  flex: none;
  height: var(--row);
  padding: 0;
  border: 0;
  background: none;
  color: #00142b;
}
.toolbar .tall { height: var(--row-tall); }
.toolbar .active { background: #00142b; color: #fff; }
.toolbar svg {
  width: var(--icon-w);
  height: var(--icon-h);
  fill: currentColor;
}
.ln {
  fill: none;
  stroke: #00142b;
  stroke-width: 1.05;
  stroke-linecap: round;
  stroke-linejoin: round;
}

.marked::after {
  content: "";
  position: absolute;
  border: solid #ed1c24;
}
.back .marked::after { left: -2px; top: -8.5px; width: 105px; height: 102px; border-width: 11px 10px; }
.front .marked::after { left: -3.5px; top: -11.8px; width: 111px; height: 120px; border-width: 12px; }
.front .marked { z-index: 1; }
.front .marked::before {
  content: "";
  position: absolute;
  z-index: -1;
  inset: 0 4px;
  background: #f4f4f4;
}

/* 3D view */
.viewport { flex: 1; min-width: 0; overflow: hidden; }
.scene { display: block; width: 100%; height: 100%; }
.ghost, .part { overflow: visible; }
.ghost * { vector-effect: non-scaling-stroke; }
.f0 { fill: rgba(0, 0, 0, .024); }
.f1 { fill: rgba(0, 0, 0, .018); }
.f2 { fill: rgba(0, 0, 0, .028); }
.f3 { fill: rgba(0, 0, 0, .07); }
.t { fill: url(#tyre); stroke: rgba(0, 0, 0, .05); stroke-width: 3px; }
.hole { fill: rgba(255, 255, 255, .4); stroke: rgba(0, 0, 0, .045); stroke-width: 3px; }
.s0, .s1, .s2, .s3 { fill: none; stroke-linejoin: round; }
.s0 { stroke: rgba(0, 0, 0, .018); stroke-width: 9px; }
.s1 { stroke: rgba(0, 0, 0, .042); stroke-width: 4px; }
.s2 { stroke: rgba(0, 0, 0, .075); stroke-width: 4px; }
.s3 { stroke: rgba(0, 0, 0, .11); stroke-width: 5px; }

/* logo */
.logo text { fill: #211551; }
.thin {
  font-family: "Liberation Serif", serif;
  font-size: 68px;
  stroke: #fff;
  stroke-width: .8px;
}
.heavy { font-family: Lato, sans-serif; font-weight: 900; font-size: 62.5px; }
.word { font-family: Lato, sans-serif; font-weight: 900; font-size: 51px; }
.cut { fill: #fff; }
.arc { fill: #211551; }

/* parts panel */
.panel { display: flex; flex-direction: column; flex: none; gap: 7.1px; }
.back .panel { width: 1065.5px; padding-top: 4.5px; }
.front .panel { width: 1079.8px; padding-bottom: 19.4px; }

.tabs { display: flex; gap: 7.3px; }
.back .tabs { height: 62.7px; }
.front .tabs { height: 63.7px; }
.tab {
  display: flex;
  flex: 1;
  align-items: center;
  justify-content: center;
  padding-top: 1px;
  background: #bad0da;
  color: #222b33;
  font-size: 21px;
  letter-spacing: -.4px;
}
.tab.on { background: #00142b; color: #fff; font-weight: 600; letter-spacing: -.7px; }

.sheet { flex: 1; background: #bad0da; }
.back .sheet { padding: 36.3px 0 0 29px; }
.front .sheet { padding: 36.9px 0 0 29.7px; }

.thead { display: grid; column-gap: 7.2px; }
.back .thead { height: 66px; grid-template-columns: 71.4px 190.5px 378.4px 61.6px 291.6px; }
.front .thead { height: 67.3px; grid-template-columns: 72.3px 193.3px 384px 61.4px 295.1px; }
.thead span {
  display: flex;
  align-items: center;
  justify-content: center;
  background: #00142b;
  color: #fff;
  font-size: 21px;
  font-weight: 600;
  letter-spacing: .15px;
}
```
